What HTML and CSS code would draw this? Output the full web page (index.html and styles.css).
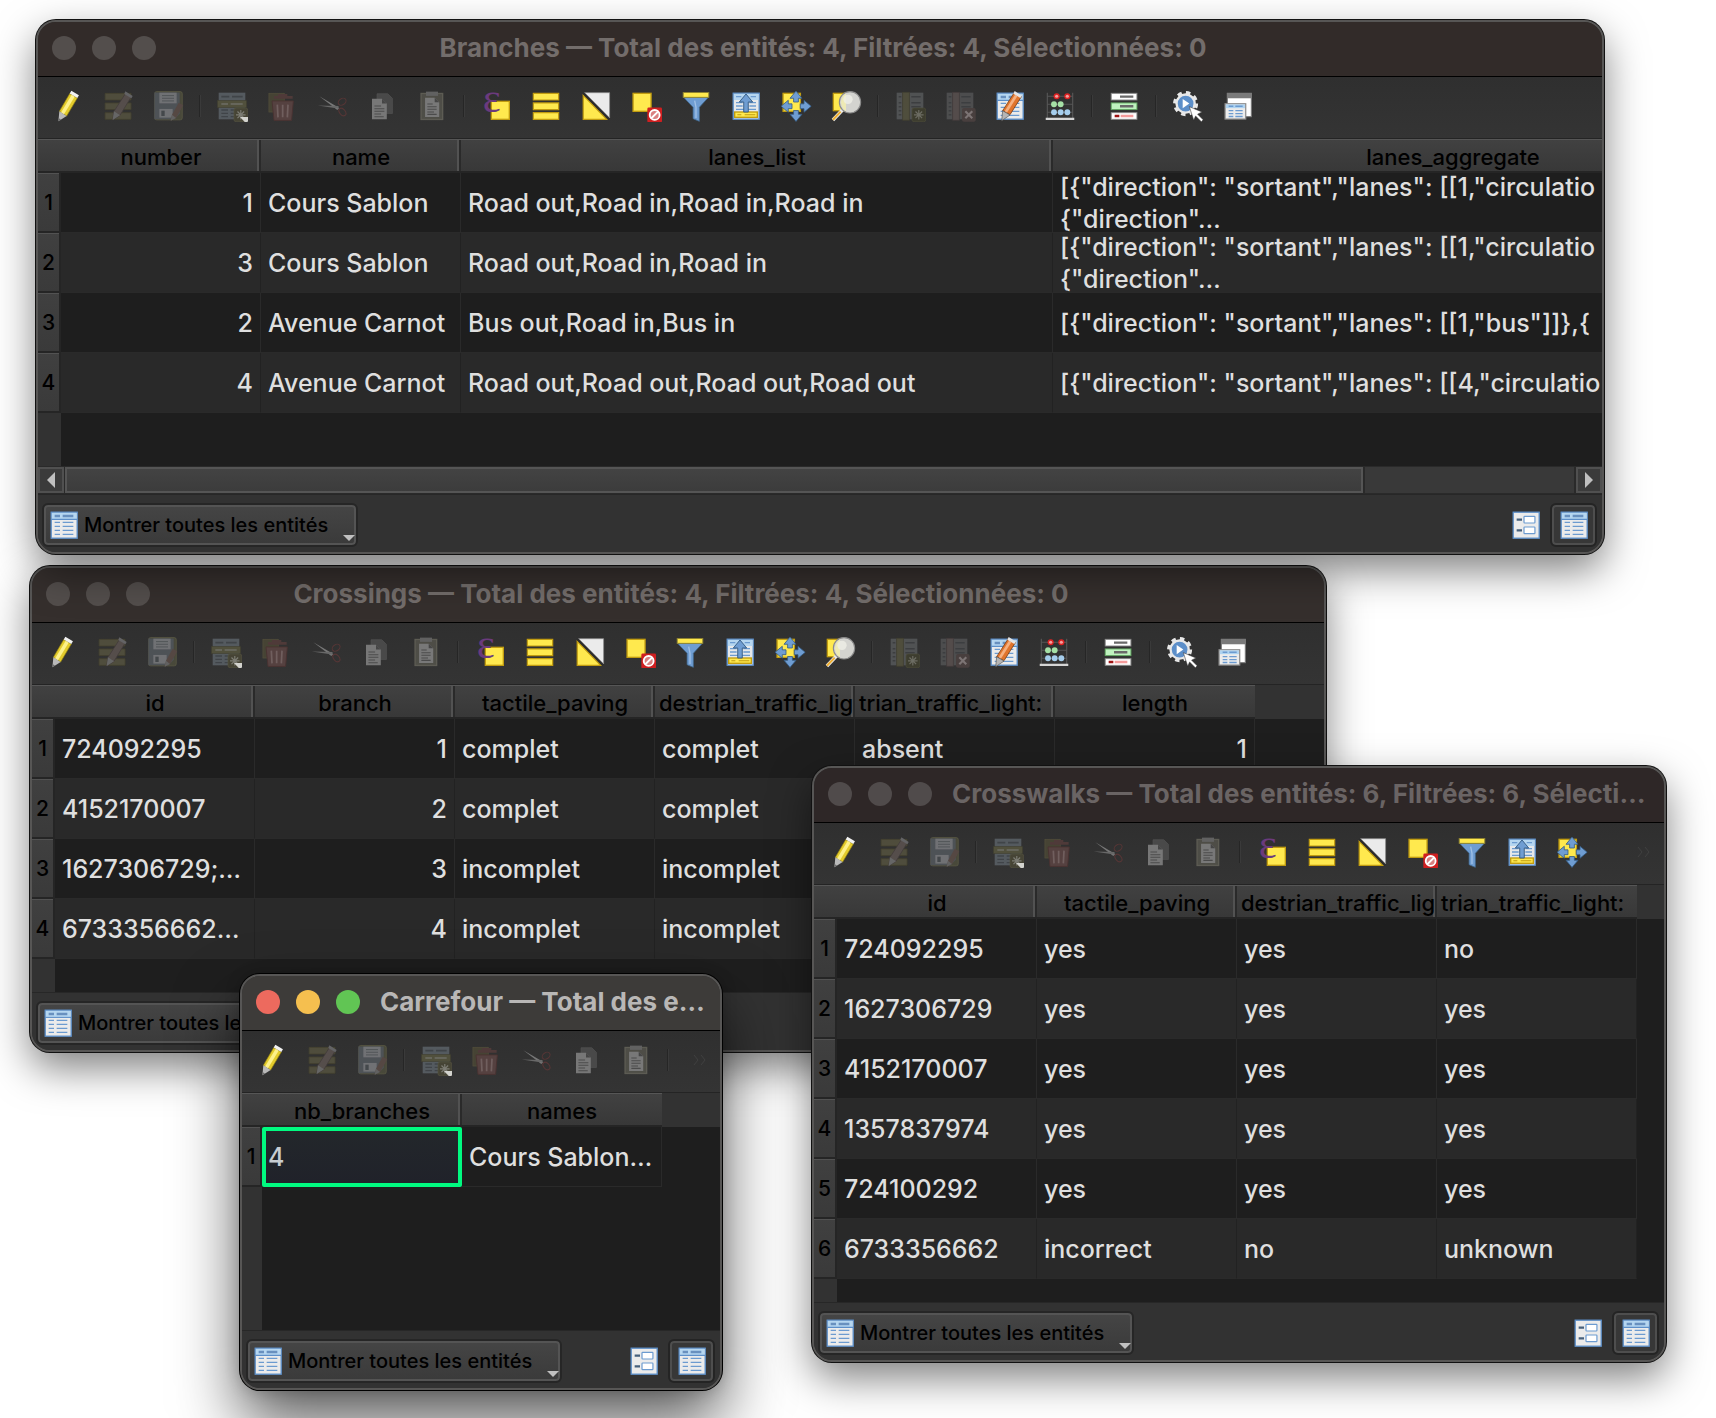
FILE: index.html
```html
<!DOCTYPE html>
<html lang="fr">
<head>
<meta charset="utf-8">
<meta name="viewport" content="width=device-width, initial-scale=1">
<title>Tables attributaires</title>
<link rel="stylesheet" href="styles.css">
</head>
<body>
<svg class="sprite" aria-hidden="true">
  <defs>
    <symbol id="i-edit" viewBox="0 0 24 24">
      <path d="M13.3 2.7 19 6 11 19.5 5.5 16z" fill="#e3cb2c" stroke="#8f7d10" stroke-width=".5"/>
      <path d="M14.8 3.6 17 5 9 18.200 6.800 16.800z" fill="#fdf18a"/>
      <path d="M14.500.5 20.200 4 19 6 13.300 2.700z" fill="#f2f2f2"/>
      <path d="M5.500 16 11 19.500 4.800 23.500z" fill="#b9b9b9"/>
      <path d="M4.900 21 6.800 22.300 4.800 23.500z" fill="#6a6a6a"/>
    </symbol>
    <symbol id="i-multi" viewBox="0 0 24 24">
      <g fill="#55523f" stroke="#46442f" stroke-width=".6"><path d="M2.300 2.500h19.500v5H2.300zM2.300 9.700h19.500v5H2.300zM2.300 17h19.500v5H2.300z"/></g>
      <path d="M18 2 22 5 13.500 19 8 22.500 9 16z" fill="#5c5350" stroke="#453e3c" stroke-width=".6"/>
      <path d="M17.500 1 23 4.500 22 6.200 16.700 3z" fill="#6c6c6f"/>
      <path d="M9 16 13.500 19 8 22.500z" fill="#707070"/>
    </symbol>
    <symbol id="i-save" viewBox="0 0 24 24">
      <rect x="2" y="1.200" width="20.700" height="21.200" rx="1.500" fill="#4d4d3c" stroke="#626148" stroke-width=".6"/>
      <path d="M1.800 1.800h19v16l-4 4.200h-15z" fill="#53585d"/>
      <rect x="5.500" y="2" width="13" height="8" fill="#7b7d80"/>
      <path d="M7.500 4.200h9M7.500 6.200h9M7.500 8.200h9" stroke="#55595d" stroke-width=".7"/>
      <rect x="5.500" y="14.200" width="10" height="6.500" fill="#7b7d80"/>
      <rect x="7" y="15.500" width="2.500" height="4" fill="#484c50"/>
      <path d="M20 9.500 23.500 11.500 18 21 14 23 15 18.500z" fill="#5c4c47"/>
      <path d="M15 18.500 18 21 14 23z" fill="#6a6a6a"/>
    </symbol>
    <symbol id="i-add" viewBox="0 0 24 24">
      <rect x="2" y="2" width="20" height="20" fill="#5b6268"/>
      <path d="M4 5h6M12 5h8" stroke="#43484d" stroke-width="1.200"/>
      <path d="M4 15h5M11 15h9M4 17.500h5M11 17.500h9M4 20h5M11 20h9" stroke="#43484d" stroke-width="1"/>
      <rect x="1.200" y="8" width="21.600" height="5" fill="#57563f" stroke="#454430" stroke-width=".5"/>
      <path d="M4 10.500h5M11 10.500h9" stroke="#7a7a70" stroke-width="1"/>
      <rect x="13.500" y="13.500" width="10.300" height="10.300" rx="1.500" fill="#4a4836" stroke="#5c5b44" stroke-width=".5"/>
      <path d="M18.600 15v7.200M15 18.600h7.200M16.100 16.100l5 5M21.100 16.100l-5 5" stroke="#8a8a80" stroke-width=".9"/>
      <path d="M18 20.200h9l-4.500 4.800z" fill="#f0f0ea"/>
    </symbol>
    <symbol id="i-delete" viewBox="0 0 24 24">
      <rect x="2.200" y="2.500" width="11.500" height="14" fill="#4a4735" stroke="#57533d" stroke-width=".6"/>
      <path d="M9 3h7v1.500h4v2H6v-2h3z" fill="#553c3b"/>
      <path d="M4.500 8.200h16l-1.300 14.600H6z" fill="#5c4443" stroke="#4d3332" stroke-width=".7"/>
      <path d="M8.500 11l.5 9.500M12.500 11v9.500M16.500 11l-.5 9.500" stroke="#7b6766" stroke-width="1.300"/>
    </symbol>
    <symbol id="i-cut" viewBox="0 0 24 24">
      <path d="M2.500 4.700 17.500 13.500 16 15z" fill="#858585"/>
      <path d="M1.200 11.700 17 12 16.500 13.800z" fill="#727272"/>
      <g fill="none" stroke="#5c3737" stroke-width=".8"><ellipse cx="19.600" cy="8.800" rx="3.200" ry="2.300" transform="rotate(-35 19.600 8.800)"/><ellipse cx="19.800" cy="16.500" rx="3.200" ry="2.100" transform="rotate(50 19.800 16.500)"/></g>
    </symbol>
    <symbol id="i-copy" viewBox="0 0 24 24">
      <path d="M8.300 2.800h8l3.500 3.500v11.400H8.300z" fill="#4e4e4e" stroke="#5a5a5a" stroke-width=".5"/>
      <path d="M4.500 6.500h7.500l3.600 3.700V22H4.500z" fill="#848484"/>
      <path d="M12 6.500v3.700h3.600z" fill="#4a4a4a"/>
      <path d="M6.300 12h5M6.300 14h7.500M6.300 16h7.500M6.300 18h5M6.300 20h7" stroke="#505050" stroke-width=".8"/>
    </symbol>
    <symbol id="i-paste" viewBox="0 0 24 24">
      <rect x="3.800" y="2.600" width="16.200" height="19.500" fill="#54534b" stroke="#65645a" stroke-width="1"/>
      <rect x="7.500" y="1.200" width="9" height="3.200" fill="#6a6a6a"/>
      <path d="M6.800 5.800h7.200l3.400 3.400v11H6.800z" fill="#858585"/>
      <path d="M14 5.800v3.400h3.400z" fill="#4a4a4a"/>
      <path d="M8.500 10.500h4M8.500 12.500h7M8.500 14.500h7M8.500 16.500h5M8.500 18.300h7" stroke="#505050" stroke-width=".8"/>
    </symbol>
    <symbol id="i-expr" viewBox="0 0 24 24">
      <rect x="8.500" y="8.500" width="13.500" height="13.500" fill="#ffe94e" stroke="#c19c10"/>
      <text x="2" y="16.500" class="epsilon">ε</text>
    </symbol>
    <symbol id="i-all" viewBox="0 0 24 24">
      <g fill="#ffe94e" stroke="#c19c10" stroke-width=".9"><path d="M2.500 2.500h19v5h-19zM2.500 9.700h19v5h-19zM2.500 17h19v5h-19z"/></g>
    </symbol>
    <symbol id="i-invert" viewBox="0 0 24 24">
      <path d="M3.500 2h18.700v19z" fill="#ebebeb" stroke="#8a8a8a" stroke-width=".6"/>
      <path d="M2.400 4v18H20z" fill="#ffe94e" stroke="#c19c10" stroke-width=".9"/>
      <path d="M2.500 2.500 22 22" stroke="#2c2c2c" stroke-width="1.300"/>
    </symbol>
    <symbol id="i-deselect" viewBox="0 0 24 24">
      <rect x="2.300" y="2.500" width="13.500" height="13.500" fill="#ffe94e" stroke="#c19c10"/>
      <rect x="13" y="13.200" width="11" height="11" rx="1" fill="#cf1f20"/>
      <circle cx="18.500" cy="18.700" r="3.700" fill="#d98080" stroke="#fff" stroke-width="1.400"/>
      <path d="M16 21.200 21 16.200" stroke="#fff" stroke-width="1.400"/>
    </symbol>
    <symbol id="i-filter" viewBox="0 0 24 24">
      <path d="M2.700 5.500h18.600l-6.800 7.500v10.500l-4.700-2V13z" fill="#6f9dd2" stroke="#41698f" stroke-width=".6"/>
      <path d="M11 8l1 5v8" stroke="#9fc0e6" stroke-width="1" fill="none"/>
      <rect x="2.400" y="1.900" width="19.200" height="3.600" fill="#ffe94e" stroke="#8f8430" stroke-width=".7"/>
    </symbol>
    <symbol id="i-table" viewBox="0 0 24 24">
      <rect x="2.400" y="2.400" width="19.500" height="19.500" fill="#ebebeb" stroke="#5d8fc9"/>
      <rect x="2.900" y="2.900" width="18.500" height="4.600" fill="#b5d6f0"/>
      <path d="M2.500 7.800h19.300" stroke="#5d8fc9" stroke-width=".8"/>
      <path d="M5 5.200h4M11 5.200h8" stroke="#6890bf" stroke-width="1.800"/>
      <path d="M5 10h4M11 10h8M5 13h4M11 13h8M5 16h4M11 16h8M5 19h4M11 19h8" stroke="#6c9bd0" stroke-width="1"/>
    </symbol>
    <symbol id="i-top" viewBox="0 0 24 24">
      <rect x="2.400" y="2.400" width="19.500" height="19.500" fill="#e6e8ea" stroke="#5d8fc9"/>
      <rect x="2.900" y="2.900" width="18.500" height="4.600" fill="#b5d6f0"/>
      <path d="M4.500 5h4M15.500 5h4M4.500 9.500h5M14.500 9.500h5M4.500 12h5M14.500 12h5M4.500 14.500h15" stroke="#6c9bd0" stroke-width="1"/>
      <rect x="3.500" y="16.500" width="17" height="4" fill="#ffe94e" stroke="#c19c10"/>
      <path d="M5.500 18.500h3M11 18.500h8" stroke="#c19c10" stroke-width=".8"/>
      <path d="M12 3l5 6h-3.300v7.500h-3.400V9H7z" fill="#6f9dd2" stroke="#345a82" stroke-width=".7"/>
    </symbol>
    <symbol id="i-pan" viewBox="0 0 24 24">
      <rect x="2.300" y="2.500" width="13" height="13.500" fill="#ffe94e" stroke="#c19c10"/>
      <g fill="#6f9dd2" stroke="#345a82" stroke-width=".6"><path d="M12 .8l4.500 5.400h-2.700V9h-3.600V6.200H7.500zM12 23.600l4.500-5.400h-2.700v-2.800h-3.600v2.800H7.500zM.8 12.200l5.400-4.500v2.700H9V14H6.200v2.700zM23.400 12.200 18 7.700v2.700h-2.800V14H18v2.700z"/></g>
    </symbol>
    <symbol id="i-zoom" viewBox="0 0 24 24">
      <rect x="2.500" y="2.500" width="9" height="13" fill="#ffe94e" stroke="#c19c10"/>
      <path d="M9.500 14.800 2.200 22.500" stroke="#e9e9e9" stroke-width="2.600"/>
      <path d="M8 16.200 2.200 22.300" stroke="#f0b030" stroke-width="1.500"/>
      <circle cx="15" cy="9.200" r="8" fill="#d3d3cf" stroke="#8a8a8a" stroke-width=".8"/>
      <path d="M12 2.500a8 8 0 0 0 0 13.500z" fill="#eeeab4"/>
      <circle cx="13.500" cy="7" r="3.500" fill="#efefe6" opacity=".8"/>
    </symbol>
    <symbol id="i-newcol" viewBox="0 0 24 24">
      <rect x="2" y="2" width="20" height="20" fill="#56585a"/>
      <path d="M3.500 5h2M13 5h7M3.500 9.500h2M13 9.500h7M3.500 12.500h2M13 12.500h7M3.500 15.500h2M3.500 18.500h2" stroke="#3f4143" stroke-width="1.100"/>
      <rect x="6.500" y="1.700" width="5" height="21" fill="#55533f" stroke="#434130" stroke-width=".6"/>
      <rect x="13.500" y="13.500" width="10.300" height="10.300" rx="1.500" fill="#403f2f" stroke="#53523c" stroke-width=".5"/>
      <path d="M18.600 15v7.200M15 18.600h7.200M16.100 16.100l5 5M21.100 16.100l-5 5" stroke="#77776c" stroke-width=".9"/>
    </symbol>
    <symbol id="i-delcol" viewBox="0 0 24 24">
      <rect x="2" y="2" width="20" height="20" fill="#525354"/>
      <path d="M3.500 5h2M13 5h7M3.500 9.500h2M13 9.500h7M3.500 12.500h2M13 12.500h7M3.500 15.500h2M3.500 18.500h2" stroke="#3f4143" stroke-width="1.100"/>
      <rect x="6.500" y="1.700" width="5" height="21" fill="#5a5150" stroke="#453c3c" stroke-width=".6"/>
      <rect x="13.500" y="13.500" width="10.300" height="10.300" rx="1.500" fill="#4d4241"/>
      <path d="M16 16l5.200 5.200M21.200 16 16 21.200" stroke="#8a8080" stroke-width="1.600"/>
    </symbol>
    <symbol id="i-calcfield" viewBox="0 0 24 24">
      <use href="#i-table"/>
      <path d="M15.500 1.500 20.500 5 12 18.500 6.500 15.500z" fill="#e0742c" stroke="#7c3c10" stroke-width=".6"/>
      <path d="M15.800 3.500 17.500 4.600 9.700 17 8 16z" fill="#f5b080"/>
      <path d="M15.500.8 20.800 4.200 19.800 6 14.500 2.800z" fill="#e4e4e4"/>
      <path d="M6.500 15.500 12 18.800 5.800 23z" fill="#b5b5b5" stroke="#555" stroke-width=".5"/>
    </symbol>
    <symbol id="i-abacus" viewBox="0 0 24 24">
      <path d="M2.500 2v19M21.500 2v19M2.500 4.700h19M2.500 10.700h19M2.500 16.700h19" stroke="#555" stroke-width=".9"/>
      <rect x="1.300" y="20.800" width="21.400" height="1.700" fill="#d5d5d5"/>
      <g fill="#d22"><circle cx="9.500" cy="4.700" r="2.300"/><circle cx="17.500" cy="4.700" r="2.300"/></g>
      <g fill="#f4a0a0"><circle cx="9.500" cy="4.700" r="1.200"/><circle cx="17.500" cy="4.700" r="1.200"/></g>
      <g fill="#a5e0a5"><circle cx="7.500" cy="10.700" r="2.200"/><circle cx="12.500" cy="10.700" r="2.200"/></g>
      <g fill="#a5cdec"><circle cx="7.500" cy="16.700" r="2.200"/><circle cx="12.500" cy="16.700" r="2.200"/><circle cx="17.500" cy="16.700" r="2.200"/></g>
    </symbol>
    <symbol id="i-format" viewBox="0 0 24 24">
      <rect x="2.400" y="2.500" width="19.300" height="5" fill="#fff" stroke="#888" stroke-width=".7"/>
      <rect x="2.400" y="9.700" width="19.300" height="5" fill="#bff2bf" stroke="#62a862" stroke-width=".7"/>
      <rect x="2.400" y="17" width="19.300" height="5" fill="#fff" stroke="#888" stroke-width=".7"/>
      <path d="M9 5h10M9 12.200h10" stroke="#6a6a6a" stroke-width="1.800"/>
      <path d="M5 19.500h3.500" stroke="#a01414" stroke-width="1.900"/><path d="M9.500 19.500h9.500" stroke="#f59c9c" stroke-width="1.900"/>
    </symbol>
    <symbol id="i-action" viewBox="0 0 24 24">
      <circle cx="10.200" cy="10.200" r="8.200" fill="none" stroke="#e8e8e8" stroke-width="2.400" stroke-dasharray="3.300 3.140"/>
      <circle cx="10.200" cy="10.200" r="6.800" fill="#5d8fc9" stroke="#e8e8e8" stroke-width="1.800"/>
      <path d="M8 6.800v6.800l5-3.400z" fill="#fff"/>
      <path d="M13 12.500l9.500 4-3.300 1.600 4.200 4.300-1.400 1.400-4.300-4.300-1.400 3.100z" fill="#fff" stroke="#333" stroke-width=".4"/>
    </symbol>
    <symbol id="i-dock" viewBox="0 0 24 24">
      <rect x="4" y="2.500" width="18" height="17.500" fill="#fff" stroke="#7a7a7a" stroke-width=".8"/>
      <rect x="3.700" y="2.200" width="18.600" height="4" fill="#7a7a7a"/>
      <rect x="2.300" y="10.300" width="15.500" height="11.500" fill="#ececec" stroke="#8a8a8a" stroke-width=".9"/>
      <rect x="2.900" y="10.800" width="14.300" height="2.800" fill="#aed3f0"/>
      <path d="M5 12.200h3.500M10 12.200h5.500M5 15.500h3.500M10 15.500h5.500M5 17.700h3.500M10 17.700h5.500M5 19.900h3.500M10 19.900h5.500" stroke="#6c9bd0" stroke-width="1"/>
    </symbol>
    <symbol id="i-form" viewBox="0 0 24 24">
      <rect x="2.400" y="2.400" width="19.500" height="19.500" fill="#ebebeb" stroke="#5d8fc9"/>
      <path d="M5 8h4M5 16h4" stroke="#46607c" stroke-width="1.800"/>
      <g fill="#fff" stroke="#6c9bd0" stroke-width=".9"><rect x="10.500" y="5.500" width="8.200" height="5" rx=".5"/><rect x="10.500" y="13.500" width="8.200" height="5" rx=".5"/></g>
    </symbol>
  </defs>
</svg>

<main class="desktop">

<section class="window branches" aria-label="Branches">
  <header class="titlebar">
    <div class="lights"><span></span><span></span><span></span></div>
    <h2>Branches — Total des entités: 4, Filtrées: 4, Sélectionnées: 0</h2>
    <div class="balance"></div>
  </header>
  <div class="toolbar" role="toolbar">
    <button aria-label="Mode édition"><svg><use href="#i-edit"/></svg></button>
    <button aria-label="Édition multiple" disabled><svg><use href="#i-multi"/></svg></button>
    <button aria-label="Enregistrer" disabled><svg><use href="#i-save"/></svg></button>
    <i></i>
    <button aria-label="Ajouter une entité" disabled><svg><use href="#i-add"/></svg></button>
    <button aria-label="Supprimer" disabled><svg><use href="#i-delete"/></svg></button>
    <button aria-label="Couper" disabled><svg><use href="#i-cut"/></svg></button>
    <button aria-label="Copier" disabled><svg><use href="#i-copy"/></svg></button>
    <button aria-label="Coller" disabled><svg><use href="#i-paste"/></svg></button>
    <i></i>
    <button aria-label="Sélection par expression"><svg><use href="#i-expr"/></svg></button>
    <button aria-label="Tout sélectionner"><svg><use href="#i-all"/></svg></button>
    <button aria-label="Inverser la sélection"><svg><use href="#i-invert"/></svg></button>
    <button aria-label="Tout désélectionner"><svg><use href="#i-deselect"/></svg></button>
    <button aria-label="Filtrer"><svg><use href="#i-filter"/></svg></button>
    <button aria-label="Sélection en haut"><svg><use href="#i-top"/></svg></button>
    <button aria-label="Centrer sur la sélection"><svg><use href="#i-pan"/></svg></button>
    <button aria-label="Zoomer sur la sélection"><svg><use href="#i-zoom"/></svg></button>
    <i></i>
    <button aria-label="Nouveau champ" disabled><svg><use href="#i-newcol"/></svg></button>
    <button aria-label="Supprimer le champ" disabled><svg><use href="#i-delcol"/></svg></button>
    <button aria-label="Organiser les colonnes"><svg><use href="#i-calcfield"/></svg></button>
    <button aria-label="Calculatrice de champ"><svg><use href="#i-abacus"/></svg></button>
    <i></i>
    <button aria-label="Mise en forme conditionnelle"><svg><use href="#i-format"/></svg></button>
    <i></i>
    <button aria-label="Actions"><svg><use href="#i-action"/></svg></button>
    <button aria-label="Ancrer la table"><svg><use href="#i-dock"/></svg></button>
  </div>
  <div class="grid">
    <table>
      <colgroup><col class="c-row"><col class="c-field"><col class="c-field"><col class="c-list"><col class="c-aggregate"></colgroup>
      <thead><tr><td></td><th>number</th><th>name</th><th>lanes_list</th><th>lanes_aggregate</th></tr></thead>
      <tbody>
        <tr><th>1</th><td class="num">1</td><td>Cours Sablon</td><td>Road out,Road in,Road in,Road in</td><td><div class="lines">[{"direction": "sortant","lanes": [[1,"circulatio<br>{"direction"…</div></td></tr>
        <tr><th>2</th><td class="num">3</td><td>Cours Sablon</td><td>Road out,Road in,Road in</td><td><div class="lines">[{"direction": "sortant","lanes": [[1,"circulatio<br>{"direction"…</div></td></tr>
        <tr><th>3</th><td class="num">2</td><td>Avenue Carnot</td><td>Bus out,Road in,Bus in</td><td>[{"direction": "sortant","lanes": [[1,"bus"]]},{</td></tr>
        <tr><th>4</th><td class="num">4</td><td>Avenue Carnot</td><td>Road out,Road out,Road out,Road out</td><td>[{"direction": "sortant","lanes": [[4,"circulatio</td></tr>
      </tbody>
    </table>
  </div>
  <div class="scrollbar">
    <button class="arrow left" aria-label="Défiler à gauche"></button>
    <div class="track"><div class="thumb"></div></div>
    <button class="arrow right" aria-label="Défiler à droite"></button>
  </div>
  <footer>
    <button class="filter" aria-haspopup="menu"><svg><use href="#i-table"/></svg>Montrer toutes les entités</button>
    <button class="view" aria-label="Vue formulaire"><svg><use href="#i-form"/></svg></button>
    <button class="view on" aria-label="Vue table" aria-pressed="true"><svg><use href="#i-table"/></svg></button>
  </footer>
</section>

<section class="window crossings" aria-label="Crossings">
  <header class="titlebar">
    <div class="lights"><span></span><span></span><span></span></div>
    <h2>Crossings — Total des entités: 4, Filtrées: 4, Sélectionnées: 0</h2>
    <div class="balance"></div>
  </header>
  <div class="toolbar" role="toolbar">
    <button aria-label="Mode édition"><svg><use href="#i-edit"/></svg></button>
    <button aria-label="Édition multiple" disabled><svg><use href="#i-multi"/></svg></button>
    <button aria-label="Enregistrer" disabled><svg><use href="#i-save"/></svg></button>
    <i></i>
    <button aria-label="Ajouter une entité" disabled><svg><use href="#i-add"/></svg></button>
    <button aria-label="Supprimer" disabled><svg><use href="#i-delete"/></svg></button>
    <button aria-label="Couper" disabled><svg><use href="#i-cut"/></svg></button>
    <button aria-label="Copier" disabled><svg><use href="#i-copy"/></svg></button>
    <button aria-label="Coller" disabled><svg><use href="#i-paste"/></svg></button>
    <i></i>
    <button aria-label="Sélection par expression"><svg><use href="#i-expr"/></svg></button>
    <button aria-label="Tout sélectionner"><svg><use href="#i-all"/></svg></button>
    <button aria-label="Inverser la sélection"><svg><use href="#i-invert"/></svg></button>
    <button aria-label="Tout désélectionner"><svg><use href="#i-deselect"/></svg></button>
    <button aria-label="Filtrer"><svg><use href="#i-filter"/></svg></button>
    <button aria-label="Sélection en haut"><svg><use href="#i-top"/></svg></button>
    <button aria-label="Centrer sur la sélection"><svg><use href="#i-pan"/></svg></button>
    <button aria-label="Zoomer sur la sélection"><svg><use href="#i-zoom"/></svg></button>
    <i></i>
    <button aria-label="Nouveau champ" disabled><svg><use href="#i-newcol"/></svg></button>
    <button aria-label="Supprimer le champ" disabled><svg><use href="#i-delcol"/></svg></button>
    <button aria-label="Organiser les colonnes"><svg><use href="#i-calcfield"/></svg></button>
    <button aria-label="Calculatrice de champ"><svg><use href="#i-abacus"/></svg></button>
    <i></i>
    <button aria-label="Mise en forme conditionnelle"><svg><use href="#i-format"/></svg></button>
    <i></i>
    <button aria-label="Actions"><svg><use href="#i-action"/></svg></button>
    <button aria-label="Ancrer la table"><svg><use href="#i-dock"/></svg></button>
  </div>
  <div class="grid">
    <table>
      <colgroup><col class="c-row"><col class="c-field"><col class="c-field"><col class="c-field"><col class="c-field"><col class="c-field"><col class="c-field"></colgroup>
      <thead><tr><td></td><th>id</th><th>branch</th><th>tactile_paving</th><th class="cut">destrian_traffic_lig</th><th class="cut">trian_traffic_light:</th><th>length</th></tr></thead>
      <tbody>
        <tr><th>1</th><td>724092295</td><td class="num">1</td><td>complet</td><td>complet</td><td>absent</td><td class="num">1</td></tr>
        <tr><th>2</th><td>4152170007</td><td class="num">2</td><td>complet</td><td>complet</td><td></td><td></td></tr>
        <tr><th>3</th><td>1627306729;…</td><td class="num">3</td><td>incomplet</td><td>incomplet</td><td></td><td></td></tr>
        <tr><th>4</th><td>6733356662…</td><td class="num">4</td><td>incomplet</td><td>incomplet</td><td></td><td></td></tr>
      </tbody>
    </table>
  </div>
  <footer>
    <button class="filter" aria-haspopup="menu"><svg><use href="#i-table"/></svg>Montrer toutes les entités</button>
  </footer>
</section>

<section class="window crosswalks" aria-label="Crosswalks">
  <header class="titlebar">
    <div class="lights"><span></span><span></span><span></span></div>
    <h2>Crosswalks — Total des entités: 6, Filtrées: 6, Sélecti…</h2>
    <div class="balance"></div>
  </header>
  <div class="toolbar" role="toolbar">
    <button aria-label="Mode édition"><svg><use href="#i-edit"/></svg></button>
    <button aria-label="Édition multiple" disabled><svg><use href="#i-multi"/></svg></button>
    <button aria-label="Enregistrer" disabled><svg><use href="#i-save"/></svg></button>
    <i></i>
    <button aria-label="Ajouter une entité" disabled><svg><use href="#i-add"/></svg></button>
    <button aria-label="Supprimer" disabled><svg><use href="#i-delete"/></svg></button>
    <button aria-label="Couper" disabled><svg><use href="#i-cut"/></svg></button>
    <button aria-label="Copier" disabled><svg><use href="#i-copy"/></svg></button>
    <button aria-label="Coller" disabled><svg><use href="#i-paste"/></svg></button>
    <i></i>
    <button aria-label="Sélection par expression"><svg><use href="#i-expr"/></svg></button>
    <button aria-label="Tout sélectionner"><svg><use href="#i-all"/></svg></button>
    <button aria-label="Inverser la sélection"><svg><use href="#i-invert"/></svg></button>
    <button aria-label="Tout désélectionner"><svg><use href="#i-deselect"/></svg></button>
    <button aria-label="Filtrer"><svg><use href="#i-filter"/></svg></button>
    <button aria-label="Sélection en haut"><svg><use href="#i-top"/></svg></button>
    <button aria-label="Centrer sur la sélection"><svg><use href="#i-pan"/></svg></button>
    <button class="more" aria-label="Plus d’outils"><svg viewBox="0 0 16 12"><path d="M2 1l4 5-4 5M9 1l4 5-4 5"/></svg></button>
  </div>
  <div class="grid">
    <table>
      <colgroup><col class="c-row"><col class="c-field"><col class="c-field"><col class="c-field"><col class="c-field"></colgroup>
      <thead><tr><td></td><th>id</th><th>tactile_paving</th><th class="cut">destrian_traffic_lig</th><th class="cut">trian_traffic_light:</th></tr></thead>
      <tbody>
        <tr><th>1</th><td>724092295</td><td>yes</td><td>yes</td><td>no</td></tr>
        <tr><th>2</th><td>1627306729</td><td>yes</td><td>yes</td><td>yes</td></tr>
        <tr><th>3</th><td>4152170007</td><td>yes</td><td>yes</td><td>yes</td></tr>
        <tr><th>4</th><td>1357837974</td><td>yes</td><td>yes</td><td>yes</td></tr>
        <tr><th>5</th><td>724100292</td><td>yes</td><td>yes</td><td>yes</td></tr>
        <tr><th>6</th><td>6733356662</td><td>incorrect</td><td>no</td><td>unknown</td></tr>
      </tbody>
    </table>
  </div>
  <footer>
    <button class="filter" aria-haspopup="menu"><svg><use href="#i-table"/></svg>Montrer toutes les entités</button>
    <button class="view" aria-label="Vue formulaire"><svg><use href="#i-form"/></svg></button>
    <button class="view on" aria-label="Vue table" aria-pressed="true"><svg><use href="#i-table"/></svg></button>
  </footer>
</section>

<section class="window carrefour" aria-label="Carrefour">
  <header class="titlebar">
    <div class="lights"><span></span><span></span><span></span></div>
    <h2>Carrefour — Total des e…</h2>
    <div class="balance"></div>
  </header>
  <div class="toolbar" role="toolbar">
    <button aria-label="Mode édition"><svg><use href="#i-edit"/></svg></button>
    <button aria-label="Édition multiple" disabled><svg><use href="#i-multi"/></svg></button>
    <button aria-label="Enregistrer" disabled><svg><use href="#i-save"/></svg></button>
    <i></i>
    <button aria-label="Ajouter une entité" disabled><svg><use href="#i-add"/></svg></button>
    <button aria-label="Supprimer" disabled><svg><use href="#i-delete"/></svg></button>
    <button aria-label="Couper" disabled><svg><use href="#i-cut"/></svg></button>
    <button aria-label="Copier" disabled><svg><use href="#i-copy"/></svg></button>
    <button aria-label="Coller" disabled><svg><use href="#i-paste"/></svg></button>
    <i></i>
    <button class="more" aria-label="Plus d’outils"><svg viewBox="0 0 16 12"><path d="M2 1l4 5-4 5M9 1l4 5-4 5"/></svg></button>
  </div>
  <div class="grid">
    <table>
      <colgroup><col class="c-row"><col class="c-field"><col class="c-field"></colgroup>
      <thead><tr><td></td><th>nb_branches</th><th>names</th></tr></thead>
      <tbody>
        <tr><th>1</th><td class="current">4</td><td>Cours Sablon…</td></tr>
      </tbody>
    </table>
  </div>
  <footer>
    <button class="filter" aria-haspopup="menu"><svg><use href="#i-table"/></svg>Montrer toutes les entités</button>
    <button class="view" aria-label="Vue formulaire"><svg><use href="#i-form"/></svg></button>
    <button class="view on" aria-label="Vue table" aria-pressed="true"><svg><use href="#i-table"/></svg></button>
  </footer>
</section>

</main>
</body>
</html>
```
FILE: styles.css
```css
* { box-sizing: border-box; }

body {
  margin: 0;
  background: #fff;
  font-family: Inter, "Liberation Sans", sans-serif;
  font-weight: 500;
}

button {
  font: inherit;
  margin: 0;
  padding: 0;
  border: 0;
  background: none;
}

.sprite { position: absolute; width: 0; height: 0; }
.epsilon { font: 32px "Liberation Serif", serif; fill: #6b3a7d; }

.desktop { position: relative; min-height: 100vh; }

/* Windows */
.window {
  --bar: #322b29;
  --title: #736d6b;
  --light: #534e4c;
  --row-head: 23px;
  position: absolute;
  display: flex;
  flex-direction: column;
  border: 2px solid #575655;
  border-radius: 20px;
  overflow: hidden;
  background: #323232;
  box-shadow: 0 0 0 1px #111, 0 16px 40px rgba(0, 0, 0, .5);
}
.branches { left: 36px; right: 112px; top: 20px; z-index: 2; }
.crossings { left: 30px; right: 390px; top: 566px; z-index: 1; --bar: #352f2d; }
.crosswalks { left: 812px; right: 50px; top: 766px; z-index: 3; --bar: #2e2727; --title: #6a6464; --light: #504b4b; }
.carrefour {
  left: 240px; top: 974px; width: 482px; z-index: 4;
  --bar: #3d3b39; --title: #b9b7b6; --row-head: 20px;
  box-shadow: 0 0 0 1px #000, 0 32px 64px rgba(0, 0, 0, .65), 0 0 16px rgba(0, 0, 0, .2);
}

.titlebar {
  display: flex;
  align-items: center;
  height: 55px;
  padding: 0 12px 3px 14px;
  background: var(--bar);
  border-bottom: 1px solid #000;
}
.titlebar h2 {
  flex: 0 1 auto;
  min-width: 0;
  margin: 0 auto;
  overflow: hidden;
  white-space: nowrap;
  font-size: 26px;
  line-height: 32px;
  font-weight: 700;
  color: var(--title);
}
.lights { display: flex; flex: none; gap: 16px; margin-right: 20px; }
.lights span { width: 24px; height: 24px; border-radius: 50%; background: var(--light); }
.carrefour .lights span:nth-child(1) { background: #ed6a5e; }
.carrefour .lights span:nth-child(2) { background: #f5bf4f; }
.carrefour .lights span:nth-child(3) { background: #61c554; }
.balance { flex: 0 1000 120px; }

.toolbar {
  display: flex;
  padding: 0 5px 3px;
  background: linear-gradient(#2f2f2f, #343434);
  border-bottom: 1px solid #242424;
}
.toolbar button {
  display: flex;
  flex: none;
  align-items: center;
  justify-content: center;
  width: 50px;
  height: 58px;
}
.toolbar svg, footer svg { flex: none; width: 32px; height: 32px; overflow: visible; }
.toolbar button:disabled svg { opacity: .85; }
.toolbar i {
  flex: none;
  align-self: center;
  width: 2px;
  height: 22px;
  margin: 0 6px;
  border-left: 1px solid #262626;
  border-right: 1px solid #3a3a3a;
}
.toolbar .more { width: 30px; margin-left: auto; }
.toolbar .more svg { width: 16px; height: 12px; fill: none; stroke: #404040; }

/* Attribute grid */
.grid {
  overflow: hidden;
  background:
    linear-gradient(#323232, #323232) 0 0 / 100% 34px no-repeat,
    linear-gradient(to right, #323232 var(--row-head), #1e1e1e 0);
}
.branches .grid { min-height: 327px; }
.crossings .grid { min-height: 307px; }
.crosswalks .grid { min-height: 417px; }
.carrefour .grid { min-height: 237px; }

table { table-layout: fixed; width: 0; border-collapse: separate; border-spacing: 0; }
.c-row { width: var(--row-head); }
.c-field { width: 200px; }
.c-list { width: 592px; }
.c-aggregate { width: 800px; }

thead th, thead td {
  height: 34px;
  padding: 2px 0 0;
  overflow: hidden;
  white-space: nowrap;
  background: linear-gradient(#414141, #383838);
  border-top: 1px solid #565656;
  border-bottom: 2px solid #252525;
  font-size: 22px;
  line-height: 28px;
  font-weight: 500;
  color: #000;
}
thead th { box-shadow: inset -2px 0 #2a2a2a, inset -4px 0 #525252; }
thead th:last-child { box-shadow: none; }
thead th.cut { padding: 2px 4px 0; text-align: left; }

tbody th {
  height: 60px;
  padding: 2px 0 0;
  background: linear-gradient(#404040, #3a3a3a);
  border: solid #252525;
  border-width: 0 2px 2px 0;
  box-shadow: inset 0 1px #525252;
  font-size: 21px;
  line-height: 28px;
  font-weight: 500;
  color: #000;
}
tbody td {
  height: 60px;
  padding: 0 7px;
  overflow: hidden;
  white-space: nowrap;
  background: #1e1e1e;
  border: solid #2a2a2a;
  border-width: 0 1px 1px 0;
  font-size: 25px;
  line-height: 32px;
  color: #dfdfdf;
}
tbody tr:nth-child(even) td { background: #292929; border-color: #222; border-bottom-color: #2a2a2a; }
tbody td.num { text-align: right; }
tbody td.current {
  padding: 0 2px;
  border: 4px solid #00fa80;
  border-radius: 2px;
  background: linear-gradient(#23272b, #20222a);
  color: #c8cdd2;
}
/* Two lines of text, centred in a row that is a little too short for them */
.lines {
  display: flex;
  align-items: center;
  height: 58px;
}
tbody td:has(.lines) { padding-top: 0; padding-bottom: 0; }

/* Horizontal scrollbar */
.scrollbar { display: flex; height: 28px; background: #2a2a2a; border-top: 1px solid #2a2a2a; }
.arrow {
  display: flex;
  flex: none;
  align-items: center;
  justify-content: center;
  width: 26px;
  height: 26px;
  border: 2px solid #505050;
  background: #3b3b3b;
}
.arrow::before { content: ""; border: solid transparent; border-width: 8px 0; }
.arrow.left::before { border-right: 8px solid #c0c0c0; }
.arrow.right::before { border-left: 8px solid #c0c0c0; }
.track { flex: 1; margin: 0 2px 1px 1px; background: #393939; }
.thumb {
  width: 86%;
  height: 26px;
  border: 2px solid #555;
  background: linear-gradient(#434343, #3c3c3c);
  box-shadow: 2px 0 #2a2a2a;
}

/* Status row */
footer {
  display: flex;
  gap: 1px;
  padding: 8px 5px 5px 4px;
  border-top: 1px solid #272727;
  background: #323232;
}
footer button {
  display: flex;
  align-items: center;
  height: 44px;
  border-radius: 6px;
}
.filter {
  position: relative;
  gap: 4px;
  width: 316px;
  margin-right: auto;
  padding-left: 4px;
  border: 2px solid #262626;
  background: linear-gradient(#454545, #3a3a3a);
  box-shadow: inset 0 0 0 2px #545454;
  font-size: 20px;
  line-height: 28px;
  white-space: nowrap;
  color: #000;
}
.filter::after {
  content: "";
  position: absolute;
  right: 1px;
  bottom: 4px;
  border: solid transparent;
  border-width: 6px 6px 0;
  border-top-color: #c0c0c0;
}
.view { justify-content: center; width: 47px; }
.view.on { border: 2px solid #242424; background: #373737; box-shadow: inset 0 0 0 2px #4e4e4e; }
```
